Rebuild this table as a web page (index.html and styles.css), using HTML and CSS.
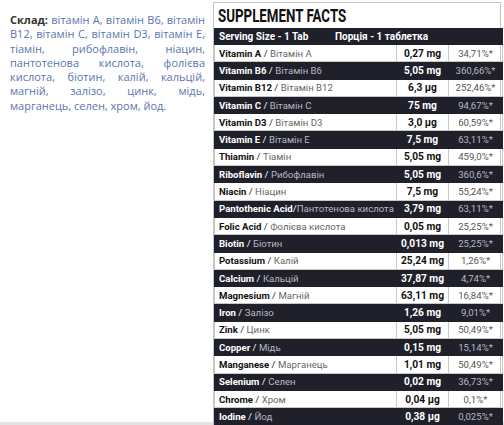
FILE: index.html
```html
<!DOCTYPE html>
<html lang="uk">
<head>
  <meta charset="UTF-8">
  <meta name="viewport" content="width=device-width, initial-scale=1.0">
  <title>Supplement Facts</title>
  <link rel="stylesheet" href="styles.css">
</head>
<body>
  <div class="page">
    <p class="composition"><b>Склад:</b> вітамін A, вітамін B6, вітамін B12, вітамін C, вітамін D3, вітамін E, тіамін, рибофлавін, ніацин, пантотенова кислота, фолієва кислота, біотин, калій, кальцій, магній, залізо, цинк, мідь, марганець, селен, хром, йод.</p>
    <div class="facts">
      <h1><span>SUPPLEMENT FACTS</span></h1>
      <table>
        <colgroup>
          <col class="col-name">
          <col class="col-amount">
          <col class="col-pct">
        </colgroup>
        <tr class="serving">
          <td colspan="3"><span class="serving-size">Serving Size - 1 Tab</span>Порція - 1 таблетка</td>
        </tr>
        <tr><td><b>Vitamin A</b> / <span>Вітамін A</span></td><td>0,27 mg</td><td>34,71%*</td></tr>
        <tr class="dark"><td><b>Vitamin B6</b> / <span>Вітамін B6</span></td><td>5,05 mg</td><td>360,66%*</td></tr>
        <tr><td><b>Vitamin B12</b> / <span>Вітамін B12</span></td><td>6,3 µg</td><td>252,46%*</td></tr>
        <tr class="dark"><td><b>Vitamin C</b> / <span>Вітамін C</span></td><td>75 mg</td><td>94,67%*</td></tr>
        <tr><td><b>Vitamin D3</b> / <span>Вітамін D3</span></td><td>3,0 µg</td><td>60,59%*</td></tr>
        <tr class="dark"><td><b>Vitamin E</b> / <span>Вітамін E</span></td><td>7,5 mg</td><td>63,11%*</td></tr>
        <tr><td><b>Thiamin</b> / <span>Тіамін</span></td><td>5,05 mg</td><td>459,0%*</td></tr>
        <tr class="dark"><td><b>Riboflavin</b> / <span>Рибофлавін</span></td><td>5,05 mg</td><td>360,6%*</td></tr>
        <tr><td><b>Niacin</b> / <span>Ніацин</span></td><td>7,5 mg</td><td>55,24%*</td></tr>
        <tr class="dark"><td><b>Pantothenic Acid</b>/<span>Пантотенова кислота</span></td><td>3,79 mg</td><td>63,11%*</td></tr>
        <tr><td><b>Folic Acid</b> / <span>Фолієва кислота</span></td><td>0,05 mg</td><td>25,25%*</td></tr>
        <tr class="dark"><td><b>Biotin</b> / <span>Біотин</span></td><td>0,013 mg</td><td>25,25%*</td></tr>
        <tr><td><b>Potassium</b> / <span>Калій</span></td><td>25,24 mg</td><td>1,26%*</td></tr>
        <tr class="dark"><td><b>Calcium</b> / <span>Кальцій</span></td><td>37,87 mg</td><td>4,74%*</td></tr>
        <tr><td><b>Magnesium</b> / <span>Магній</span></td><td>63,11 mg</td><td>16,84%*</td></tr>
        <tr class="dark"><td><b>Iron</b> / <span>Залізо</span></td><td>1,26 mg</td><td>9,01%*</td></tr>
        <tr><td><b>Zink</b> / <span>Цинк</span></td><td>5,05 mg</td><td>50,49%*</td></tr>
        <tr class="dark"><td><b>Copper</b> / <span>Мідь</span></td><td>0,15 mg</td><td>15,14%*</td></tr>
        <tr><td><b>Manganese</b> / <span>Марганець</span></td><td>1,01 mg</td><td>50,49%*</td></tr>
        <tr class="dark"><td><b>Selenium</b> / <span>Селен</span></td><td>0,02 mg</td><td>36,73%*</td></tr>
        <tr><td><b>Chrome</b> / <span>Хром</span></td><td>0,04 µg</td><td>0,1%*</td></tr>
        <tr class="dark"><td><b>Iodine</b> / <span>Йод</span></td><td>0,38 µg</td><td>0,025%*</td></tr>
      </table>
    </div>
  </div>
</body>
</html>
```

FILE: styles.css
```css
body {
  margin: 0;
  background: #fff;
  font-family: "Open Sans", Arial, sans-serif;
}
.page {
  display: flex;
  align-items: flex-start;
  height: 422px;
  border-bottom: 3px solid #e4e4e4;
}
.composition {
  width: 195px;
  margin: 13px 0 0 10px;
  font-size: 11px;
  line-height: 14.3px;
  color: #5a76ad;
  text-align: justify;
}
.composition b {
  color: #333;
}
.facts {
  margin: 2px 0 0 8px;
  width: 286px;
  border: 1px solid #c4c4c4;
  border-bottom: none;
}
h1 {
  margin: 0;
  padding: 1px 0 0 4px;
  height: 24px;
  font-family: "Roboto", sans-serif;
  font-weight: bold;
  font-size: 18px;
  line-height: 24px;
  color: #111;
}
h1 span {
  display: inline-block;
  transform: scaleX(0.74);
  transform-origin: left center;
  white-space: nowrap;
}
table {
  width: 100%;
  table-layout: fixed;
  border-collapse: collapse;
  font-family: "Roboto", sans-serif;
  font-size: 9.6px;
}
.col-name {
  width: 182px;
}
.col-amount {
  width: 52px;
}
.col-pct {
  width: 54px;
}
tr {
  height: 17.3px;
}
td {
  padding: 0 0 0 4px;
  border: 1px solid #c8c8c8;
  color: #222;
  white-space: nowrap;
  overflow: hidden;
}
td:nth-child(2) {
  text-align: center;
  font-weight: bold;
  font-size: 10.2px;
  color: #111;
  padding: 0;
}
td:nth-child(3) {
  text-align: center;
  color: #555;
  padding: 0;
}
td b {
  color: #111;
}
td span {
  color: #666;
}
.dark td {
  background: #20202b;
  color: #fff;
  border-color: #20202b;
}
.dark td b,
.dark td:nth-child(2) {
  color: #fff;
}
.dark td span,
.dark td:nth-child(3) {
  color: #b8b8c4;
}
.serving {
  height: 16px;
}
.serving td {
  background: #20202b;
  color: #fff;
  font-weight: bold;
  font-size: 10px;
  border-color: #20202b;
}
.serving .serving-size {
  display: inline-block;
  width: 116px;
  color: #fff;
}
```
